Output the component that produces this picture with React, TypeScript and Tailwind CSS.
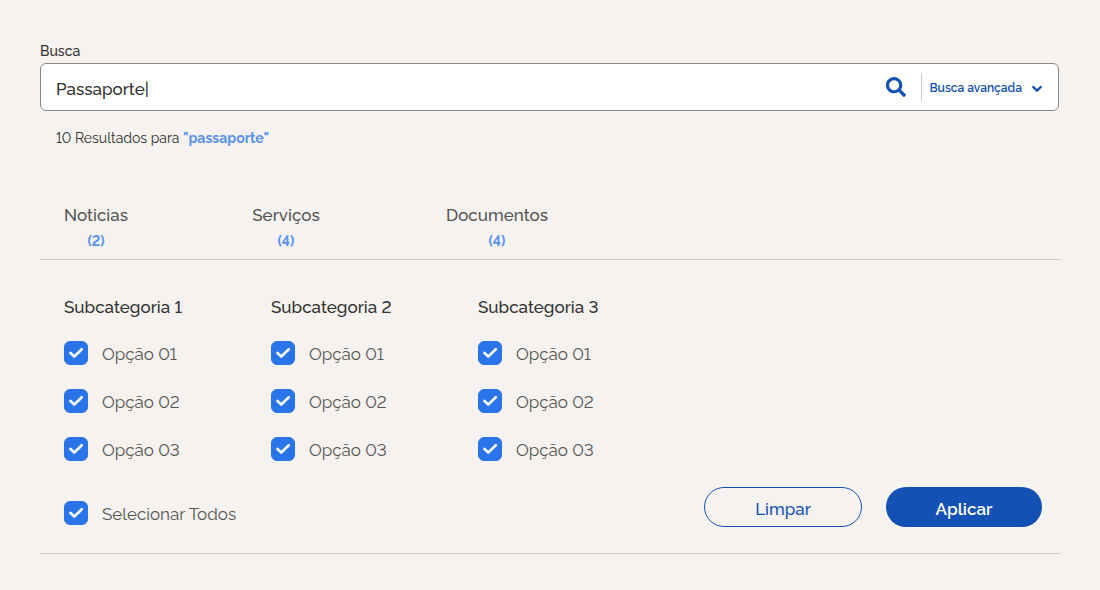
import { useState } from 'react';

const tabs = [
  { label: 'Noticias', count: 2, width: 'w-16' },
  { label: 'Serviços', count: 4, width: 'w-[68px]' },
  { label: 'Documentos', count: 4, width: 'w-[106px]' },
];
const categories = ['Subcategoria 1', 'Subcategoria 2', 'Subcategoria 3'];
const options = ['Opção 01', 'Opção 02', 'Opção 03'];
const dots = ['', 'top-[35px]', 'top-[31px]'];

function SearchIcon() {
  return (
    <svg viewBox="0 0 512 512" className="size-5" fill="currentColor" aria-hidden="true">
      <path d="M505 442.7L405.3 343c-4.500-4.500-10.600-7-17-7H372c27.600-35.300 44-79.700 44-128C416 93.100 322.900 0 208 0S0 93.100 0 208s93.100 208 208 208c48.300 0 92.700-16.400 128-44v16.300c0 6.400 2.500 12.500 7 17l99.700 99.700c9.400 9.400 24.600 9.400 33.900 0l28.300-28.300c9.400-9.400 9.400-24.600.1-34zM208 336c-70.700 0-128-57.200-128-128 0-70.700 57.200-128 128-128 70.700 0 128 57.200 128 128 0 70.700-57.200 128-128 128z" />
    </svg>
  );
}

function Check({ label, checked, onChange }: { label: string; checked: boolean; onChange: () => void }) {
  return (
    <label className="flex h-6 cursor-pointer items-center gap-[14px] text-[17px] leading-6 text-[#555555]">
      <span className="relative grid size-6 shrink-0 place-items-center">
        <input
          type="checkbox"
          checked={checked}
          onChange={onChange}
          className="size-6 appearance-none rounded-md border border-[#2a74ea] bg-white checked:bg-[#2a74ea]"
        />
        {checked && (
          <svg
            viewBox="0 0 24 24"
            className="pointer-events-none absolute inset-0 size-6 text-white"
            fill="none"
            stroke="currentColor"
            strokeWidth="2.6"
            strokeLinecap="round"
            strokeLinejoin="round"
            aria-hidden="true"
          >
            <path d="M6.500 12L10.300 15.500L17.800 8.200" />
          </svg>
        )}
      </span>
      <span className="whitespace-nowrap pt-[2px]">{label}</span>
    </label>
  );
}

export default function App() {
  const [query, setQuery] = useState('Passaporte|');
  const [selected, setSelected] = useState<boolean[]>(Array(9).fill(true));
  const all = selected.every(Boolean);
  const toggle = (index: number) => setSelected(selected.map((v, i) => (i === index ? !v : v)));

  return (
    <main className="min-h-screen bg-[#f6f2ef] px-10 pt-10 pb-9 font-[Raleway,Lato,sans-serif] text-[#333333] lining-nums">
      <label htmlFor="busca" className="block h-[23px] text-sm leading-[22px] font-medium">
        Busca
      </label>
      <div className="mr-px flex h-12 items-center rounded-md border border-[#888888] bg-white pr-4 pl-[15px] text-[#1351b4]">
        <input
          id="busca"
          value={query}
          onChange={(e) => setQuery(e.target.value)}
          className="h-full min-w-0 flex-1 pt-1 text-[17px] font-medium text-[#333333] outline-none"
        />
        <button type="button" aria-label="Buscar" className="mr-[15px]">
          <SearchIcon />
        </button>
        <button type="button" className="flex h-7 items-center gap-[10px] border-l border-[#cccccc] pl-2 text-xs font-semibold">
          <span className="pt-[2px]">Busca avançada</span>
          <svg viewBox="0 0 10 8" className="mt-1 h-2 w-[10px]" fill="none" stroke="currentColor" strokeWidth="2.400" strokeLinecap="round" strokeLinejoin="round" aria-hidden="true">
            <path d="M1.300 2L5 5.700L8.700 2" />
          </svg>
        </button>
      </div>
      <p className="mt-4 pl-4 text-sm leading-[22px]">
        10 Resultados para <strong className="font-bold text-[#5992ed]">"passaporte"</strong>
      </p>

      <nav className="mt-[52px] flex h-[59px] gap-[124px] border-b border-[#cccccc] pl-6" aria-label="Categorias">
        {tabs.map((tab) => (
          <button key={tab.label} type="button" className={`${tab.width} flex flex-col items-center whitespace-nowrap`}>
            <span className="text-[17px] leading-7 font-medium text-[#555555]">{tab.label}</span>
            <span className="text-sm leading-6 font-bold text-[#5992ed]">({tab.count})</span>
          </button>
        ))}
      </nav>

      <section className="border-b border-[#cccccc] pb-[26px]">
        <div className="flex pt-[33px] pl-6">
          {categories.map((category, c) => (
            <fieldset key={category} className="w-[207px]">
              <legend className="mb-5 text-[17px] leading-7 font-medium">{category}</legend>
              <div className="flex flex-col gap-6">
                {options.map((option, o) => (
                  <div key={option} className="relative">
                    <Check label={option} checked={selected[c * 3 + o]} onChange={() => toggle(c * 3 + o)} />
                    {o > 0 && <span className={`absolute left-[2px] size-[2px] rounded-full bg-white ${dots[o]}`} />}
                  </div>
                ))}
              </div>
            </fieldset>
          ))}
        </div>
        <div className="mt-[26px] flex items-start justify-between pr-[18px] pl-6">
          <div className="pt-[14px]">
            <Check label="Selecionar Todos" checked={all} onChange={() => setSelected(Array(9).fill(!all))} />
          </div>
          <div className="flex gap-6 text-[17px]">
            <button type="button" className="h-10 w-[158px] rounded-full border border-[#1351b4] pt-[5px] font-medium text-[#1351b4]">
              Limpar
            </button>
            <button type="button" className="h-10 w-[156px] rounded-full bg-[#1351b4] pt-[5px] font-semibold text-white">
              Aplicar
            </button>
          </div>
        </div>
      </section>
    </main>
  );
}
